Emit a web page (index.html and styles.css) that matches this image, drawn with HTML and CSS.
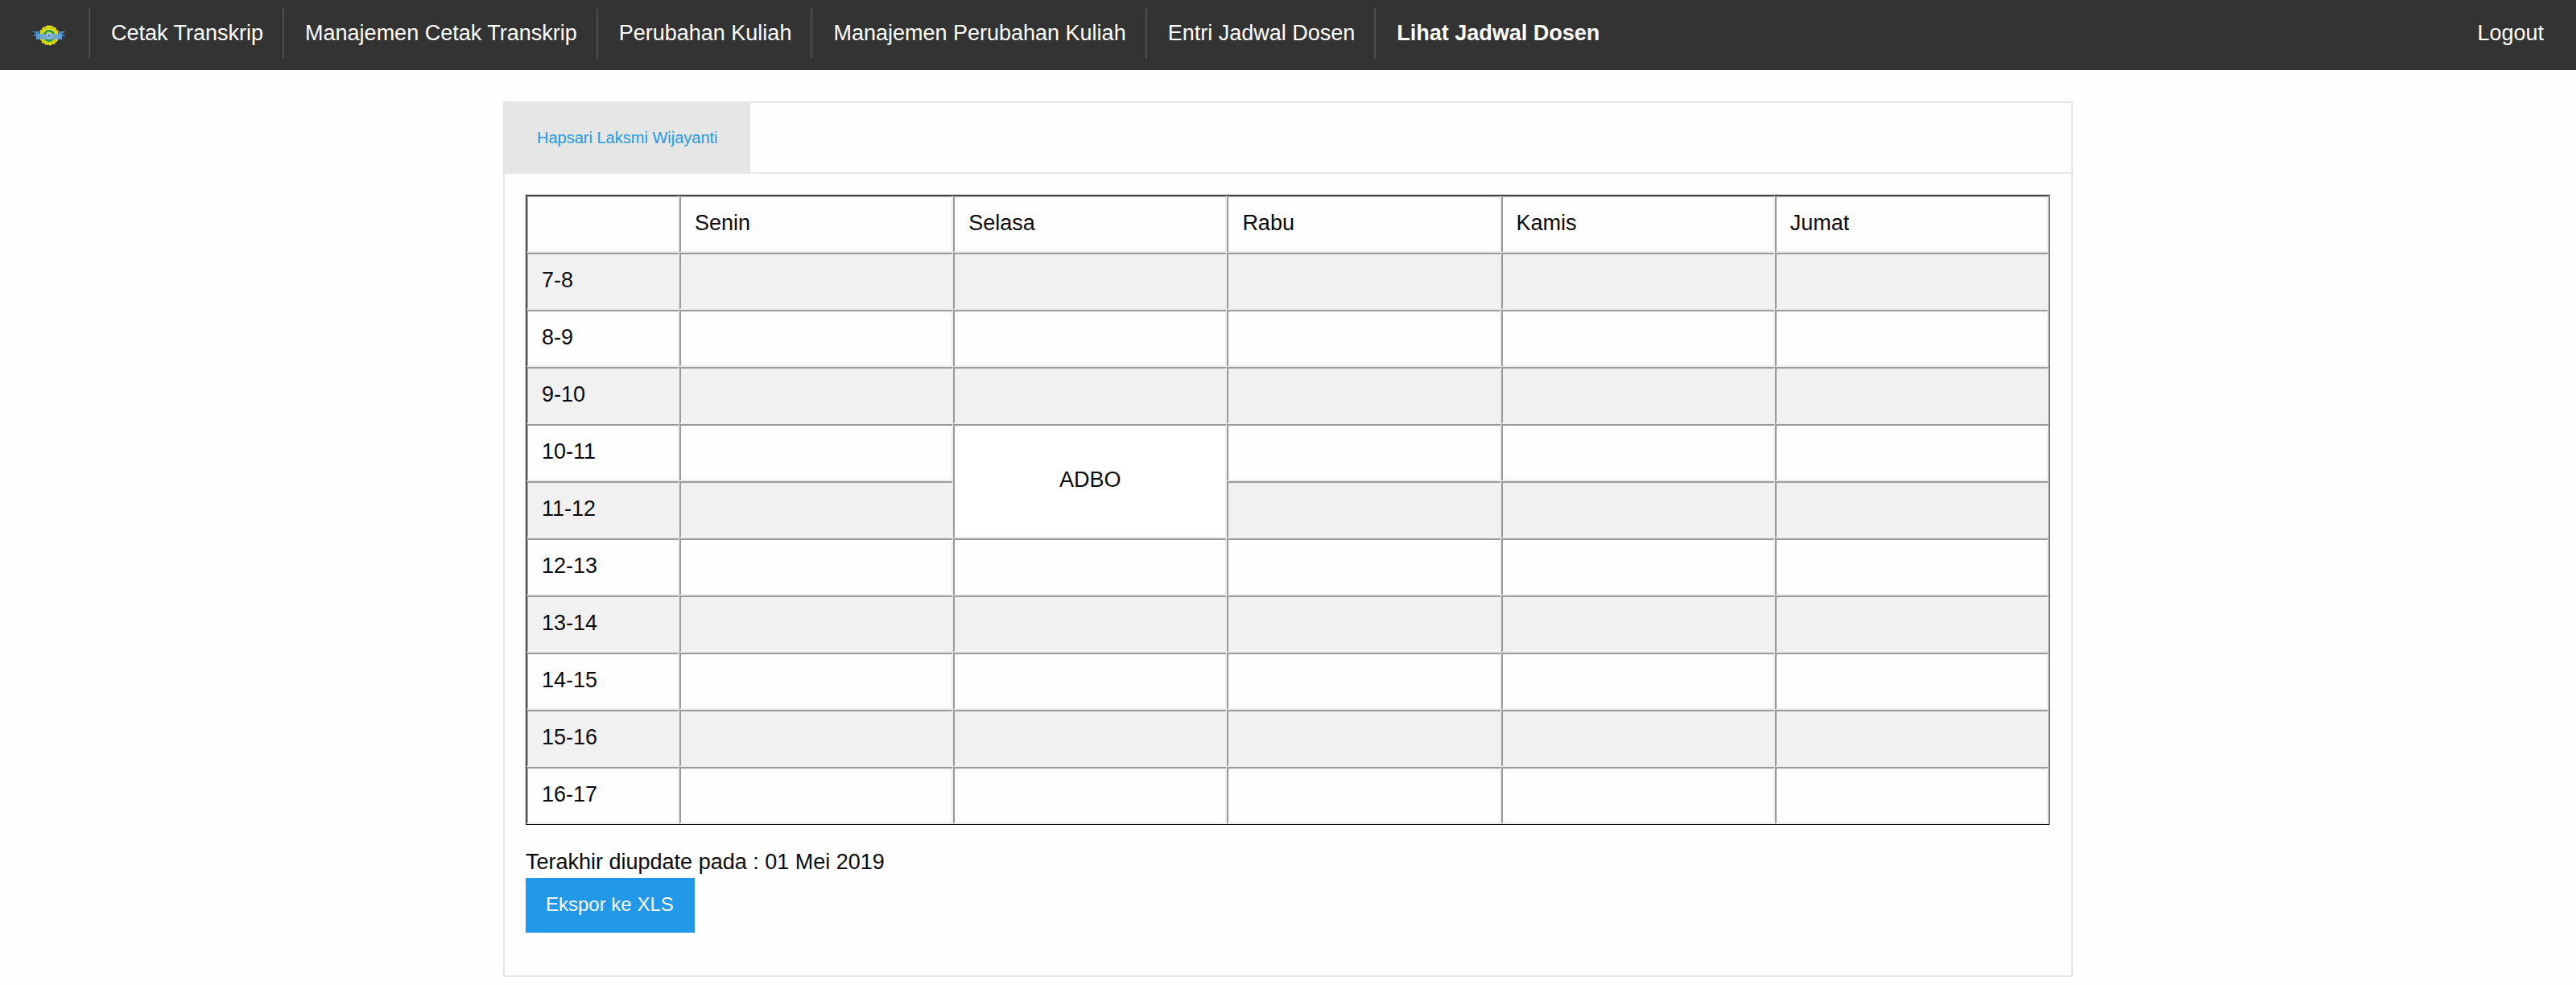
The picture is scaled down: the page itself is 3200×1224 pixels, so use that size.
FILE: index.html
```html
<!DOCTYPE html>
<html lang="id">
<head>
<meta charset="utf-8">
<title>Lihat Jadwal Dosen</title>
<link rel="stylesheet" href="styles.css">
</head>
<body>
<header class="topbar">
  <nav>
    <ul class="menu">
      <li><a class="brand" href="#" aria-label="Beranda">
        <svg class="logo" viewBox="0 0 42 26" aria-hidden="true">
          <path d="M21 0l2 3h-4z" fill="#f2ea0c"/>
          <circle cx="21" cy="13" r="11.5" fill="#f2ea0c"/>
          <circle cx="21" cy="13" r="11.5" fill="none" stroke="#e6df10" stroke-width="2" stroke-dasharray="3 2"/>
          <circle cx="21" cy="13" r="9.5" fill="none" stroke="#8f9410" stroke-width="1.4" stroke-dasharray="1.5 1.5"/>
          <circle cx="21" cy="13.500" r="7.500" fill="#179447"/>
          <circle cx="21" cy="13.500" r="5" fill="#c9d94a"/>
          <path d="M0 8h9v6H0l5-3zM42 8h-9v6h9l-5-3z" fill="#4586c6"/>
          <path d="M5 11h32v7H5z" fill="#5b9bd5"/>
          <path d="M10 11h22v7H10z" fill="#75a9c4"/>
          <circle cx="21" cy="13.500" r="3.500" fill="#8bbce6"/>
          <circle cx="21" cy="13.500" r="1.500" fill="#4a86c8"/>
        </svg></a></li>
      <li><a href="#">Cetak Transkrip</a></li>
      <li><a href="#">Manajemen Cetak Transkrip</a></li>
      <li><a href="#">Perubahan Kuliah</a></li>
      <li><a href="#">Manajemen Perubahan Kuliah</a></li>
      <li><a href="#">Entri Jadwal Dosen</a></li>
      <li><a class="current" href="#" aria-current="page">Lihat Jadwal Dosen</a></li>
    </ul>
  </nav>
  <a class="logout" href="#">Logout</a>
</header>
<main class="container">
  <ul class="tabs">
    <li><a href="#jadwal">Hapsari Laksmi Wijayanti</a></li>
  </ul>
  <section class="panel" id="jadwal">
    <table class="schedule">
      <thead>
        <tr><td></td><th scope="col">Senin</th><th scope="col">Selasa</th><th scope="col">Rabu</th><th scope="col">Kamis</th><th scope="col">Jumat</th></tr>
      </thead>
      <tbody>
        <tr><th scope="row">7-8</th><td></td><td></td><td></td><td></td><td></td></tr>
        <tr><th scope="row">8-9</th><td></td><td></td><td></td><td></td><td></td></tr>
        <tr><th scope="row">9-10</th><td></td><td></td><td></td><td></td><td></td></tr>
        <tr><th scope="row">10-11</th><td></td><td class="course" rowspan="2">ADBO</td><td></td><td></td><td></td></tr>
        <tr><th scope="row">11-12</th><td></td><td></td><td></td><td></td></tr>
        <tr><th scope="row">12-13</th><td></td><td></td><td></td><td></td><td></td></tr>
        <tr><th scope="row">13-14</th><td></td><td></td><td></td><td></td><td></td></tr>
        <tr><th scope="row">14-15</th><td></td><td></td><td></td><td></td><td></td></tr>
        <tr><th scope="row">15-16</th><td></td><td></td><td></td><td></td><td></td></tr>
        <tr><th scope="row">16-17</th><td></td><td></td><td></td><td></td><td></td></tr>
      </tbody>
    </table>
    <p class="updated">Terakhir diupdate pada : 01 Mei 2019</p>
    <button class="export" type="button">Ekspor ke XLS</button>
  </section>
</main>
</body>
</html>
```
FILE: styles.css
```css
* {
  box-sizing: border-box;
}

body {
  margin: 0;
  background: #fefefe;
  color: #0a0a0a;
  font-family: "Liberation Sans", Arial, sans-serif;
  font-size: 27px;
  line-height: 40px;
}

a {
  text-decoration: none;
}

.topbar {
  display: flex;
  justify-content: space-between;
  align-items: flex-start;
  padding: 9px 16px 14px 14px;
  background: #333;
}

.menu,
.tabs {
  display: flex;
  margin: 0;
  padding: 0;
  list-style: none;
}

.menu li + li {
  border-left: 2px solid #4c4c4c;
}

.topbar a {
  display: block;
  padding: 12px 24px 12px 26px;
  color: #fff;
}

.topbar .brand {
  display: flex;
  align-items: center;
  height: 64px;
  padding: 5px 28px 0 26px;
}

.logo {
  width: 42px;
  height: 26px;
}

.topbar .current {
  font-weight: bold;
}

.container {
  max-width: 2000px;
  margin: 39px auto 0;
  padding: 0 25px 10px;
}

.tabs {
  border: 2px solid #e6e6e6;
}

.tabs a {
  display: block;
  margin-bottom: -2px;
  padding: 33px 40px 35px;
  background: #e6e6e6;
  color: #2199e8;
  font-size: 20px;
  line-height: 20px;
}

.panel {
  padding: 26px 27px 26px 26px;
  border: 2px solid #e6e6e6;
  border-top: 0;
}

.schedule {
  width: 100%;
  margin-bottom: 26px;
  border: 1px solid #000;
  border-spacing: 0;
  table-layout: fixed;
}

.schedule th,
.schedule td {
  height: 71px;
  padding: 11px 17px 15px;
  border: 2px solid;
  border-color: #9a9a9a #eee #eee #9a9a9a;
  font-weight: normal;
  text-align: left;
}

.schedule tr > :first-child {
  width: 190px;
}

.schedule tbody tr:nth-child(odd) {
  background: #f1f1f1;
}

.schedule .course {
  background: #fff;
  text-align: center;
}

.updated {
  margin: 0;
}

.export {
  display: block;
  margin-bottom: 27px;
  padding: 21px 26px 23px 25px;
  border: 0;
  background: #2199e8;
  color: #fefefe;
  font: 24px/24px "Liberation Sans", Arial, sans-serif;
}
```
